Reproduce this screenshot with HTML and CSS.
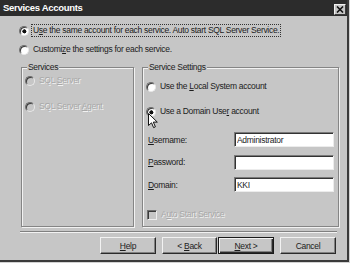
FILE: index.html
```html
<!DOCTYPE html>
<html lang="en">
<head>
    <meta charset="UTF-8">
    <title>Services Accounts</title>
    <link rel="stylesheet" href="styles.css">
</head>
<body>
    <div class="dialog">
        <div class="titlebar">
            <span class="title">Services Accounts</span>
            <span class="close">
                <svg width="8" height="7" viewBox="0 0 8 7"><path d="M1 0.5 L7 6.5 M7 0.5 L1 6.5" stroke="#111" stroke-width="1.6"/></svg>
            </span>
        </div>
        <div class="content">
            <!-- account choice -->
            <div class="choices">
                <div class="opt"><span class="radio checked"></span><span class="focus">U<u>s</u>e the same account for each service. Auto start SQL Server Service.</span></div>
                <div class="opt"><span class="radio"></span><span class="txt">Customi<u>z</u>e the settings for each service.</span></div>
            </div>
            <div class="groups">
                <fieldset class="group services">
                    <legend>Services</legend>
                    <div class="opt off first"><span class="radio dis"></span><span class="txt">SQL <u>S</u>erver</span></div>
                    <div class="opt off second"><span class="radio dis"></span><span class="txt">SQL Server <u>A</u>gent</span></div>
                </fieldset>
                <fieldset class="group settings">
                    <legend>Service Settings</legend>
                    <div class="opt first"><span class="radio"></span><span class="txt">Use the <u>L</u>ocal System account</span></div>
                    <div class="opt second"><span class="radio checked"></span><span class="txt">Use a Domain Use<u>r</u> account</span></div>
                    <div class="fields">
                        <label for="user"><u>U</u>sername:</label>
                        <input id="user" type="text" value="Administrator">
                        <label for="pass"><u>P</u>assword:</label>
                        <input id="pass" type="password" value="">
                        <label for="dom"><u>D</u>omain:</label>
                        <input id="dom" type="text" value="KKI">
                    </div>
                    <div class="opt off check"><span class="box"></span><span class="txt">A<u>u</u>to Start Service</span></div>
                </fieldset>
            </div>
            <div class="sep"></div>
            <div class="buttons">
                <button class="btn help"><u>H</u>elp</button>
                <button class="btn back">&lt; <u>B</u>ack</button>
                <button class="btn next default"><u>N</u>ext &gt;</button>
                <button class="btn cancel">Cancel</button>
            </div>
        </div>
        <!-- mouse pointer over the domain radio -->
        <svg class="pointer" width="11" height="16" viewBox="0 0 11 16"><path d="M0.5 0.5 L0.5 12.5 L3.5 9.8 L5.6 14.6 L7.4 13.8 L5.3 9.1 L9.3 9.1 Z" fill="#fff" stroke="#111" stroke-width="1"/></svg>
    </div>
</body>
</html>
```

FILE: styles.css
```css
/* dialog frame */
body {
    margin: 0;
    background-color: #d2d2d2;
    font-family: "Liberation Sans", Arial, sans-serif;
    font-size: 8.5px;
    letter-spacing: -0.3px;
    color: #1c1c1c;
}

.dialog {
    position: relative;
    box-sizing: border-box;
    width: 349px;
    height: 262px;
    background-color: #c6c6c6;
    border-right: 2px solid #3a3a3a;
    border-bottom: 2px solid #3a3a3a;
}

.titlebar {
    display: flex;
    align-items: flex-start;
    height: 16px;
    background-color: #2c2c2c;
    color: #fff;
}

.title {
    padding: 2px 0 0 3px;
    font-weight: bold;
    font-size: 9.5px;
    line-height: 12px;
}

.close {
    display: flex;
    align-items: center;
    justify-content: center;
    box-sizing: border-box;
    width: 12px;
    height: 11px;
    margin: 4px 1px 0 auto;
    background-color: #c6c6c6;
    border: 1px solid;
    border-color: #f2f2f2 #3a3a3a #3a3a3a #f2f2f2;
}

.content {
    padding-top: 8px;
}

/* radio rows */
.opt {
    display: flex;
    align-items: center;
    height: 13px;
    line-height: 13px;
    white-space: nowrap;
}

.choices {
    padding-left: 19px;
}

.choices .opt + .opt {
    margin-top: 6px;
}

.radio {
    box-sizing: border-box;
    width: 10px;
    height: 10px;
    border-radius: 50%;
    background-color: #fff;
    border: 1px solid;
    border-color: #6e6e6e #e8e8e8 #e8e8e8 #6e6e6e;
    box-shadow: inset 1px 1px 0 #3a3a3a;
}

.radio.checked {
    background: radial-gradient(circle at 55% 55%, #111 0, #111 1.8px, #fff 2.3px);
}

.radio.dis {
    background-color: #c6c6c6;
}

.txt {
    margin-left: 4px;
}

.focus {
    margin-left: 2px;
    padding: 0 1px;
    border: 1px dotted #333;
    line-height: 11px;
}

.off .txt {
    color: #a8a8a8;
    text-shadow: 1px 1px 0 #f2f2f2;
}

/* group boxes */
.groups {
    display: flex;
    gap: 8px;
    margin-top: 5px;
    padding-left: 21px;
}

.group {
    box-sizing: border-box;
    height: 166px;
    margin: 0;
    padding: 0 0 0 3px;
    border: 1px solid #858585;
    box-shadow: inset 1px 1px 0 #f2f2f2, 1px 1px 0 #f2f2f2;
}

.group legend {
    margin-left: 2px;
    padding: 0 1px;
    line-height: 12px;
    background-color: #c6c6c6;
}

.services {
    width: 113px;
}

.services .first {
    margin-top: 1px;
}

.services .second {
    margin-top: 13px;
}

.settings {
    width: 197px;
}

.settings .first {
    margin-top: 7px;
}

.settings .second {
    margin-top: 12px;
}

.fields {
    display: grid;
    grid-template-columns: 86px 100px;
    grid-auto-rows: 15px;
    row-gap: 7.5px;
    align-items: center;
    margin-top: 14px;
    padding-left: 2px;
}

.fields input {
    box-sizing: border-box;
    width: 100px;
    height: 15px;
    margin: 0;
    padding: 0 2px;
    font: inherit;
    letter-spacing: inherit;
    color: #1c1c1c;
    background-color: #fff;
    border: 1px solid;
    border-color: #7a7a7a #ececec #ececec #7a7a7a;
    box-shadow: inset 1px 1px 0 #333;
    outline: none;
}

.check {
    margin-top: 16px;
    padding-left: 1px;
}

.box {
    box-sizing: border-box;
    width: 10px;
    height: 10px;
    border: 1px solid;
    border-color: #6e6e6e #ececec #ececec #6e6e6e;
    box-shadow: inset 1px 1px 0 #3a3a3a;
}

.check .txt {
    margin-left: 4px;
}

/* bottom buttons */
.sep {
    height: 0;
    margin: 4px 10px 0 20px;
    border-top: 1px solid #808080;
    border-bottom: 1px solid #f2f2f2;
}

.buttons {
    display: flex;
    justify-content: flex-end;
    margin-top: 4px;
    padding-right: 11px;
}

.btn {
    box-sizing: border-box;
    width: 56px;
    height: 17px;
    padding: 0;
    font: inherit;
    letter-spacing: inherit;
    color: #1c1c1c;
    background-color: #c6c6c6;
    border: 1px solid;
    border-color: #f2f2f2 #2a2a2a #2a2a2a #f2f2f2;
    box-shadow: inset -1px -1px 0 #808080;
}

.btn.back {
    width: 55px;
    margin-left: 6px;
}

.btn.next {
    margin-left: 1px;
}

.btn.cancel {
    margin-left: 6px;
}

.btn.default {
    border-color: #1a1a1a;
    box-shadow: inset 1px 1px 0 #f2f2f2, inset -1px -1px 0 #2a2a2a, inset -2px -2px 0 #808080;
}

.pointer {
    position: absolute;
    left: 148px;
    top: 113px;
}
```
